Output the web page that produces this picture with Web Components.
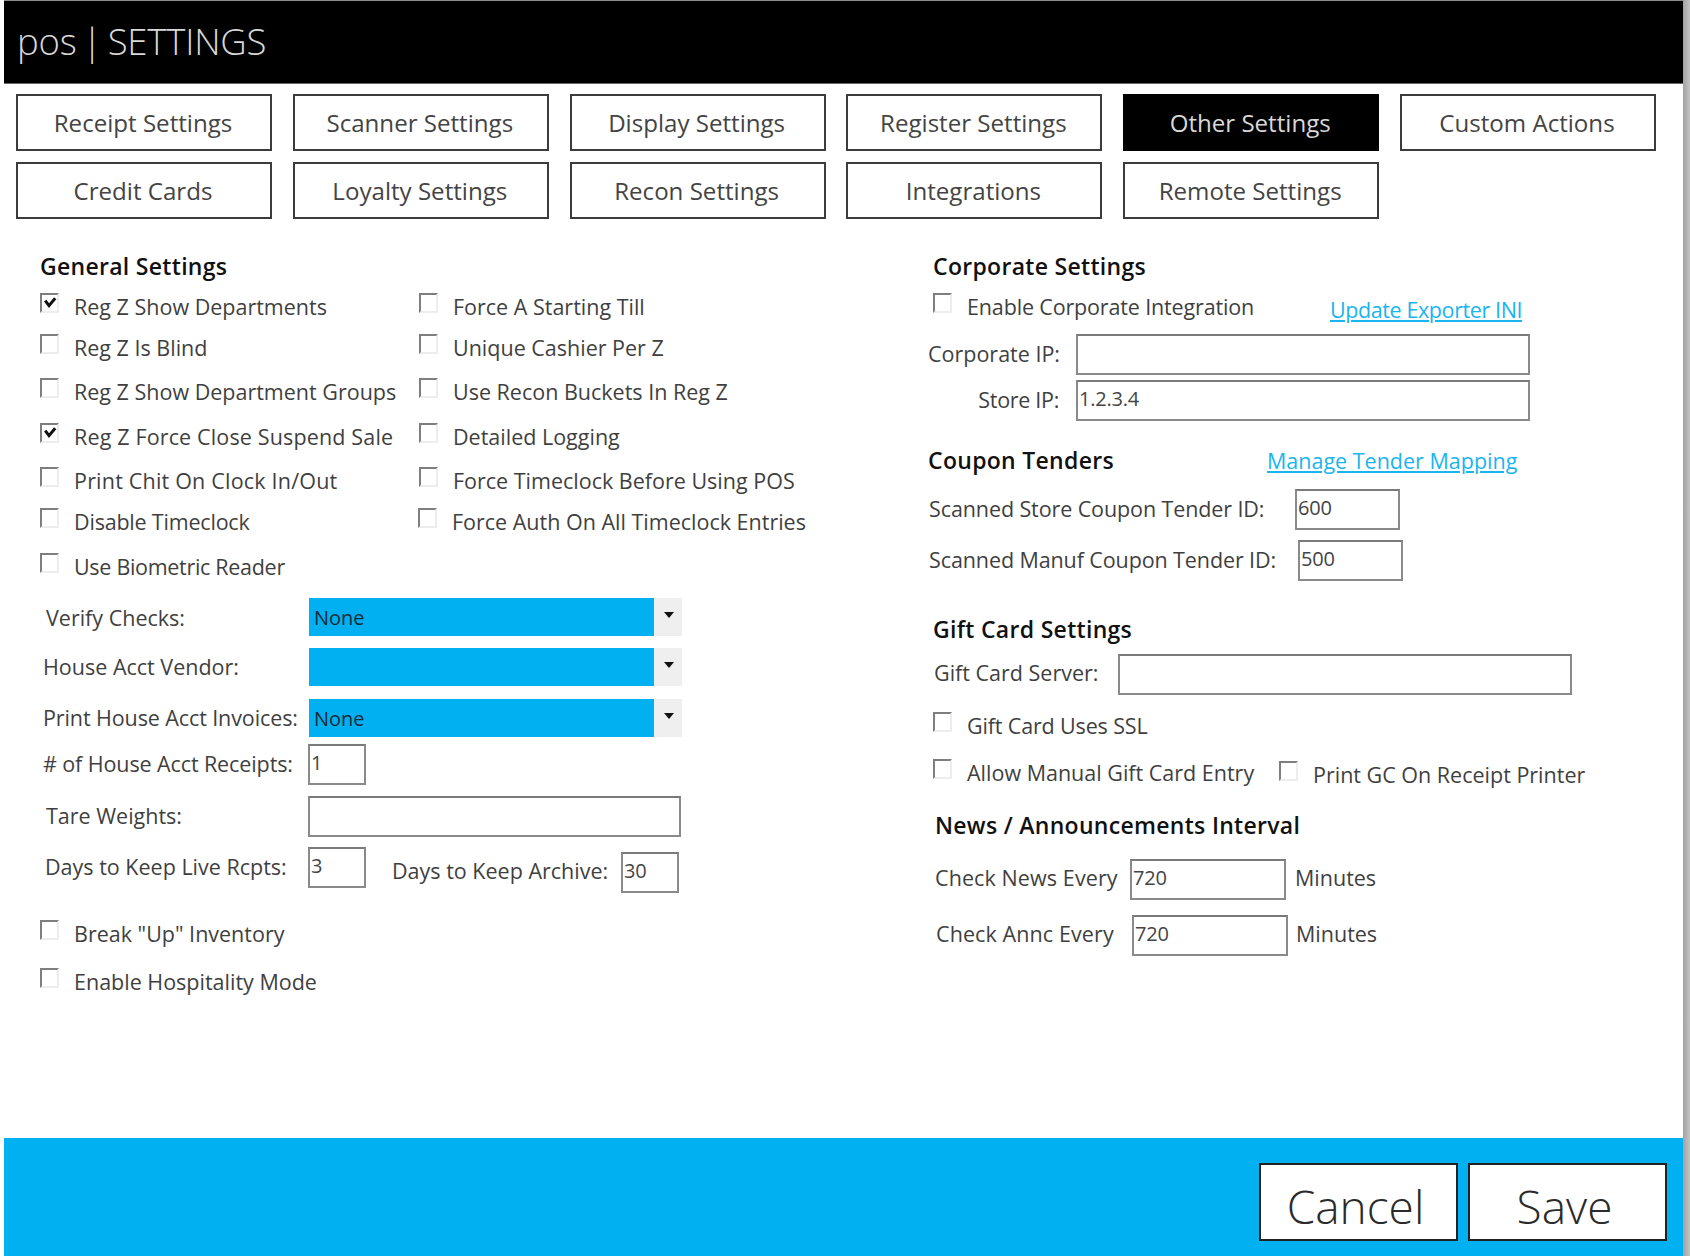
<!DOCTYPE html>
<html><head><meta charset="utf-8"><title>pos | SETTINGS</title>
<style>
html,body{margin:0;padding:0;background:#fff}
body{font-family:"Open Sans","Noto Sans","Liberation Sans",sans-serif;font-weight:400;color:#3a3a3a}
</style></head><body>
<pos-app>
  <pos-titlebar>pos | SETTINGS</pos-titlebar>
  <pos-tabs>
    <pos-tab>Receipt Settings</pos-tab><pos-tab>Scanner Settings</pos-tab><pos-tab>Display Settings</pos-tab><pos-tab>Register Settings</pos-tab><pos-tab active>Other Settings</pos-tab><pos-tab>Custom Actions</pos-tab>
    <pos-tab>Credit Cards</pos-tab><pos-tab>Loyalty Settings</pos-tab><pos-tab>Recon Settings</pos-tab><pos-tab>Integrations</pos-tab><pos-tab>Remote Settings</pos-tab>
  </pos-tabs>
  <pos-main>
    <pos-col style="width:889px;padding-left:40px">
      <pos-heading style="margin-top:30px">General Settings</pos-heading>
      <pos-checkgrid>
        <pos-check checked>Reg Z Show Departments</pos-check><pos-check>Force A Starting Till</pos-check>
        <pos-check>Reg Z Is Blind</pos-check><pos-check>Unique Cashier Per Z</pos-check>
        <pos-check>Reg Z Show Department Groups</pos-check><pos-check>Use Recon Buckets In Reg Z</pos-check>
        <pos-check checked style="letter-spacing:.15px">Reg Z Force Close Suspend Sale</pos-check><pos-check>Detailed Logging</pos-check>
        <pos-check style="letter-spacing:.2px">Print Chit On Clock In/Out</pos-check><pos-check>Force Timeclock Before Using POS</pos-check>
        <pos-check style="letter-spacing:-.2px">Disable Timeclock</pos-check><pos-check style="margin-left:-1px">Force Auth On All Timeclock Entries</pos-check>
        <pos-check style="letter-spacing:-.3px">Use Biometric Reader</pos-check>
      </pos-checkgrid>
      <pos-row style="margin-top:4px"><pos-label style="width:263px;margin-left:6px;padding-top:4px">Verify Checks:</pos-label><pos-select>None</pos-select></pos-row>
      <pos-row style="margin-top:12px"><pos-label style="width:266px;margin-left:3px;padding-top:2px">House Acct Vendor:</pos-label><pos-select></pos-select></pos-row>
      <pos-row style="margin-top:13px"><pos-label style="width:266px;margin-left:3px;padding-top:2px;letter-spacing:-.1px">Print House Acct Invoices:</pos-label><pos-select>None</pos-select></pos-row>
      <pos-row style="margin-top:7px"><pos-label style="width:265px;margin-left:3px;letter-spacing:-.1px">&#35; of House Acct Receipts:</pos-label><pos-input style="width:58px">1</pos-input></pos-row>
      <pos-row style="margin-top:11px"><pos-label style="width:262px;margin-left:6px">Tare Weights:</pos-label><pos-input style="width:373px"></pos-input></pos-row>
      <pos-row style="margin-top:10px;align-items:flex-start">
        <pos-label style="width:263px;margin-left:5px;height:41px">Days to Keep Live Rcpts:</pos-label><pos-input style="width:58px">3</pos-input>
        <pos-label style="width:229px;margin-left:26px;margin-top:5px;height:41px;padding-bottom:4px">Days to Keep Archive:</pos-label><pos-input style="width:58px;margin-top:5px">30</pos-input>
      </pos-row>
      <pos-check style="margin-top:20px;height:42px">Break "Up" Inventory</pos-check>
      <pos-check style="margin-top:6px;height:42px">Enable Hospitality Mode</pos-check>
    </pos-col>
    <pos-col style="flex:1;padding-left:40px">
      <pos-heading style="margin-top:30px;margin-left:4px">Corporate Settings</pos-heading>
      <pos-row style="height:42px;margin-left:4px">
        <pos-check style="width:397px;letter-spacing:-.15px">Enable Corporate Integration</pos-check><pos-link style="margin-top:6px;letter-spacing:-.4px">Update Exporter INI</pos-link>
      </pos-row>
      <pos-row style="margin-top:6px"><pos-label style="width:146px;margin-left:-1px;margin-right:2px">Corporate IP:</pos-label><pos-input style="width:454px"></pos-input></pos-row>
      <pos-row style="margin-top:5px"><pos-label style="width:147px;justify-content:flex-end;padding-right:17px;letter-spacing:-.3px">Store IP:</pos-label><pos-input style="width:454px">1.2.3.4</pos-input></pos-row>
      <pos-row style="margin-top:23px;height:36px"><pos-heading style="width:338px;height:36px;margin-left:-1px;margin-right:1px">Coupon Tenders</pos-heading><pos-link style="padding-bottom:2px">Manage Tender Mapping</pos-link></pos-row>
      <pos-row style="margin-top:9px"><pos-label style="width:366px;letter-spacing:-.1px">Scanned Store Coupon Tender ID:</pos-label><pos-input style="width:105px">600</pos-input></pos-row>
      <pos-row style="margin-top:10px"><pos-label style="width:369px;letter-spacing:-.1px">Scanned Manuf Coupon Tender ID:</pos-label><pos-input style="width:105px">500</pos-input></pos-row>
      <pos-heading style="margin-top:31px;margin-left:4px">Gift Card Settings</pos-heading>
      <pos-row style="margin-top:5px"><pos-label style="width:184px;margin-left:5px;padding-bottom:3px">Gift Card Server:</pos-label><pos-input style="width:454px"></pos-input></pos-row>
      <pos-check style="margin-top:10px;height:42px;margin-left:4px;letter-spacing:-.15px">Gift Card Uses SSL</pos-check>
      <pos-row style="margin-top:5px;height:42px;margin-left:4px">
        <pos-check style="width:346px">Allow Manual Gift Card Entry</pos-check><pos-check style="margin-top:4px">Print GC On Receipt Printer</pos-check>
      </pos-row>
      <pos-heading style="margin-top:14px;margin-left:6px">News / Announcements Interval</pos-heading>
      <pos-row style="margin-top:14px"><pos-label style="width:195px;margin-left:6px;padding-bottom:4px;letter-spacing:.1px">Check News Every</pos-label><pos-input style="width:156px">720</pos-input><pos-label style="margin-left:9px;padding-bottom:4px">Minutes</pos-label></pos-row>
      <pos-row style="margin-top:15px"><pos-label style="width:196px;margin-left:7px;padding-bottom:4px;letter-spacing:.1px">Check Annc Every</pos-label><pos-input style="width:156px">720</pos-input><pos-label style="margin-left:8px;padding-bottom:4px">Minutes</pos-label></pos-row>
    </pos-col>
  </pos-main>
  <pos-footer><pos-action>Cancel</pos-action><pos-action>Save</pos-action></pos-footer>
</pos-app>
<script>
function def(name, css, html){
  customElements.define(name, class extends HTMLElement{
    constructor(){super();const r=this.attachShadow({mode:'open'});r.innerHTML='<style>'+css+'</style>'+(html||'<slot></slot>');}
  });
}
def('pos-app',':host{display:flex;flex-direction:column;width:1690px;height:1256px;box-sizing:border-box;padding:0 7px 0 4px;background:linear-gradient(90deg,#fff 1683px,#a2a2a2 1683px,#c4c4c4 1690px);overflow:hidden}');
def('pos-titlebar',':host{display:flex;align-items:center;height:84px;flex:none;background:#000;border-top:1px solid #8c8c8c;border-bottom:1px solid #6a6a6a;color:#d8d8d8;font-size:36.5px;font-weight:300;padding:0 0 3px 13px;box-sizing:border-box;letter-spacing:-.2px;word-spacing:-3.5px;white-space:pre}');
def('pos-tabs',':host{display:grid;grid-template-columns:repeat(6,256px);column-gap:20.8px;row-gap:10.5px;grid-auto-rows:57px;padding:10px 0 0 12px;flex:none}');
def('pos-tab',':host{display:flex;align-items:center;justify-content:center;box-sizing:border-box;border:2px solid #3c3c3c;background:#fff;color:#444;padding-right:2px;font-size:24.1px;font-weight:400;white-space:nowrap}:host([active]){background:#000;color:#d8d8d8;border-color:#000}');
def('pos-main',':host{display:flex;flex:1;min-height:0;margin-left:-4px}');
def('pos-col',':host{display:flex;flex-direction:column;box-sizing:border-box}');
def('pos-heading',':host{display:flex;align-items:center;height:37px;flex:none;box-sizing:border-box;padding-bottom:3px;font-size:23px;letter-spacing:.3px;font-weight:600;color:#111;white-space:nowrap}');
def('pos-checkgrid',':host{display:grid;grid-template-columns:379px 1fr;grid-template-rows:42px 40px 48px 42px 46px 36px 54px;flex:none}');
def('pos-check',':host{display:flex;align-items:center;font-size:21.5px;color:#3f3f3f;white-space:nowrap}.b{display:flex;flex:none;width:19px;height:20px;box-sizing:border-box;margin:-8px 15px 0 0;border:2px solid #ededed;border-top-color:#7e7e7e;border-left-color:#7e7e7e;background:#fff}svg{display:none;width:15px;height:16px}:host([checked]) svg{display:block}.t{padding-bottom:1px}',
 '<span class="b"><svg viewBox="0 0 15 16"><path d="M3.2 5.6 L7 10.6 L13.2 3.2" fill="none" stroke="#111" stroke-width="3"/></svg></span><span class="t"><slot></slot></span>');
def('pos-row',':host{display:flex;align-items:center;flex:none}');
def('pos-label',':host{display:flex;align-items:center;flex:none;box-sizing:border-box;padding-bottom:2px;font-size:21.5px;color:#3f3f3f;white-space:nowrap}');
def('pos-input',':host{display:flex;align-items:center;flex:none;height:41px;box-sizing:border-box;border:2px solid #8a8a8a;border-top-color:#7a7a7a;background:#fff;padding:0 0 3px 1px;font-size:20px;letter-spacing:-.2px;color:#444;white-space:pre}');
def('pos-select',':host{display:flex;flex:none;width:373px;height:38px;background:#efefef;font-size:20px;color:#1a2a3a}.v{display:flex;align-items:center;width:345px;background:#00b0f0;padding:2px 0 0 5px;box-sizing:border-box}.a{flex:1;display:flex;align-items:center;justify-content:center}svg{width:10px;height:6px;margin:0 0 4px 1px}',
 '<span class="v"><slot></slot></span><span class="a"><svg viewBox="0 0 10 6"><path d="M0 0H10L5 6Z" fill="#111"/></svg></span>');
def('pos-link',':host{display:block;font-size:21.5px;color:#19b5ee;text-decoration:underline;white-space:nowrap}');
def('pos-footer',':host{display:flex;flex:none;height:118px;justify-content:flex-end;align-items:flex-start;gap:10px;padding:25px 16px 0 0;box-sizing:border-box;background:#00b0f0}');
def('pos-action',':host{display:flex;align-items:center;justify-content:center;width:199px;height:78px;box-sizing:border-box;border:2px solid #222;background:#fff;color:#2b2b2b;padding:8px 6px 0 0;font-size:46px;font-weight:300}');
</script>
</body></html>
